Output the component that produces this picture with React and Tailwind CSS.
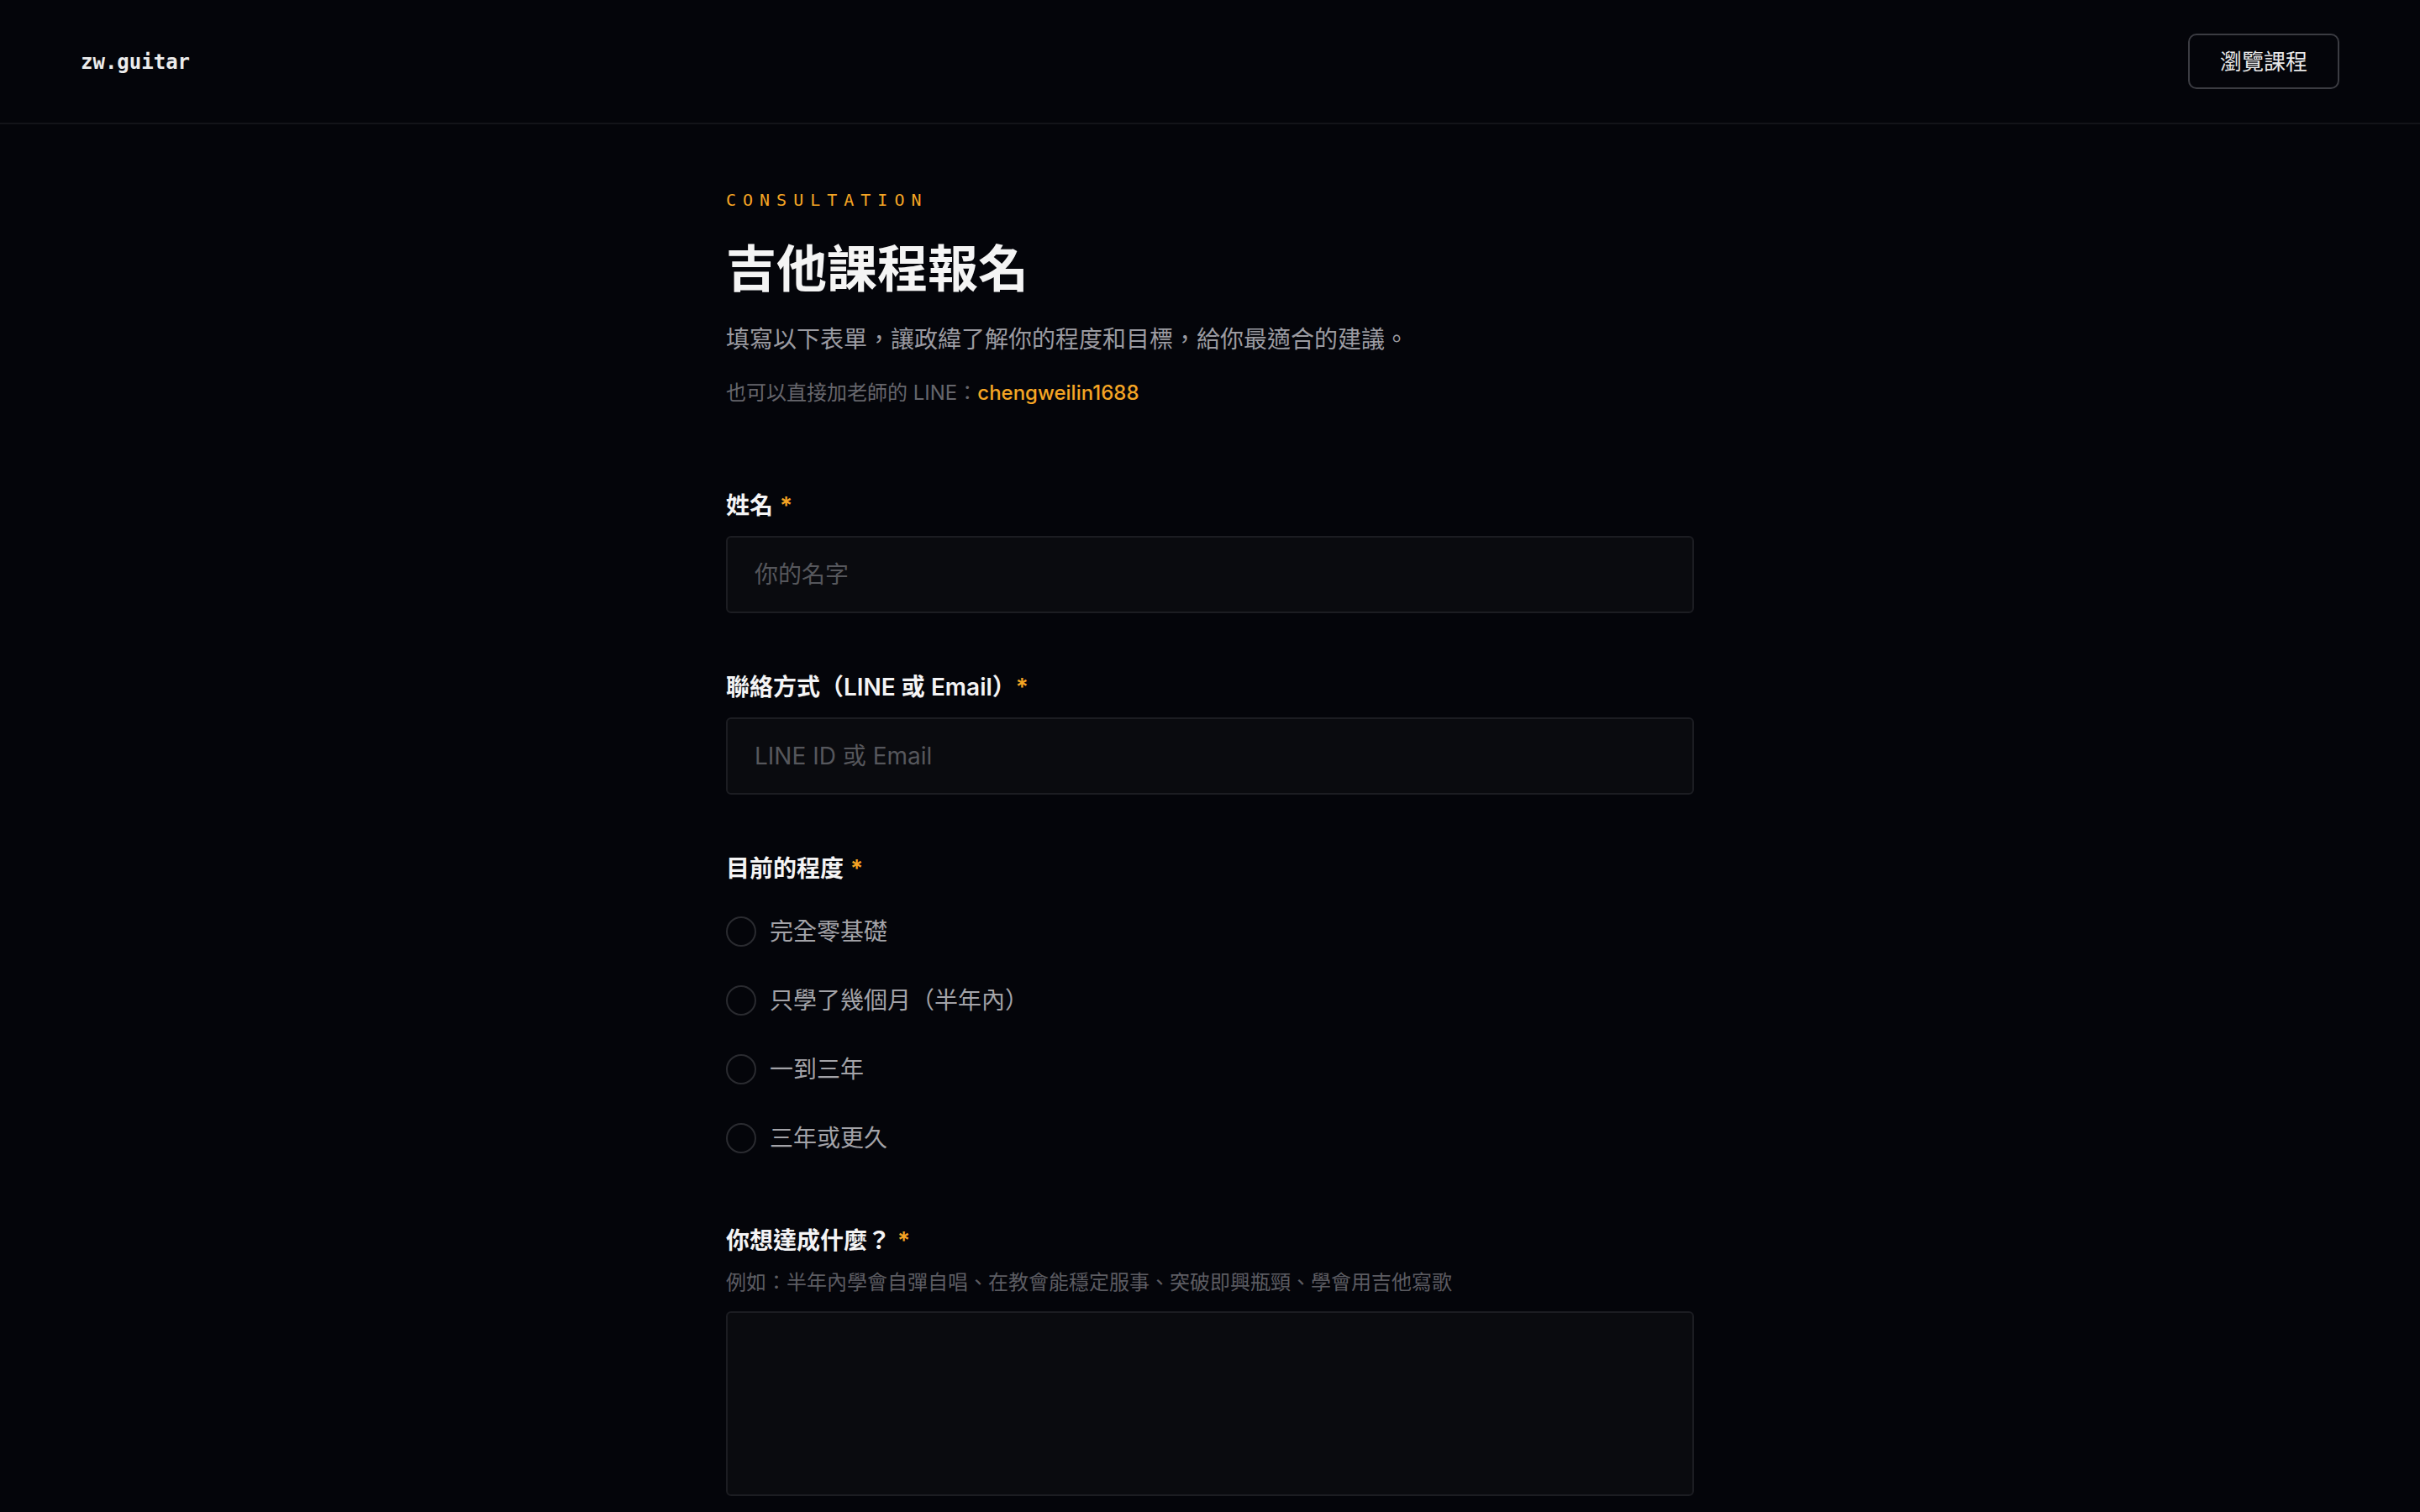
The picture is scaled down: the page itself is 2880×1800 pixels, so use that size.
import { useState } from 'react';

const levels = ['完全零基礎', '只學了幾個月（半年內）', '一到三年', '三年或更久'];

function Label({ children, tight }) {
  return (
    <label className="block text-[28px] leading-[40px] font-semibold text-[#f4f4f5]">
      {children}
      <span className={tight ? 'ml-0 text-[#f5a524]' : 'ml-2 text-[#f5a524]'}>*</span>
    </label>
  );
}

export default function App() {
  const [level, setLevel] = useState(null);

  return (
    <div className="min-h-screen bg-[#04050a] font-['Inter','Noto_Sans_CJK_TC',sans-serif] text-white">
      <header className="flex h-[148px] items-center justify-between border-b-2 border-[#131419] px-24">
        <span className="pt-[2px] font-['DejaVu_Sans_Mono',monospace] text-[24px] font-bold text-[#ececec]">
          zw.guitar
        </span>
        <button className="h-[66px] rounded-[10px] border-2 border-[#3b3c42] px-9 text-[26px] text-[#e8e8e8]">
          瀏覽課程
        </button>
      </header>

      <main className="mx-auto max-w-[1152px] pt-[74px]">
        <p className="font-['DejaVu_Sans_Mono',monospace] text-[20px] leading-[32px] tracking-[0.4em] text-[#f5a524]">
          CONSULTATION
        </p>
        <h1 className="mt-[30px] text-[60px] font-bold leading-[72px] text-[#f4f4f4]">吉他課程報名</h1>
        <p className="mt-[26px] text-[28px] leading-[44px] text-[#9b9ba1]">
          填寫以下表單，讓政緯了解你的程度和目標，給你最適合的建議。
        </p>
        <p className="mt-6 text-[24px] leading-[36px] text-[#66666c]">
          也可以直接加老師的 LINE：
          <span className="font-medium text-[#f5a524]">chengweilin1688</span>
        </p>

        <form className="mt-[96px]">
          <div>
            <Label>姓名</Label>
            <input
              placeholder="你的名字"
              className="mt-4 h-[92px] w-full rounded-[6px] border-2 border-[#1c1d22] bg-[#0a0b0f] px-8 text-[28px] text-white outline-none placeholder:text-[#56575c]"
            />
          </div>

          <div className="mt-[68px]">
            <Label tight>聯絡方式（LINE 或 Email）</Label>
            <input
              placeholder="LINE ID 或 Email"
              className="mt-4 h-[92px] w-full rounded-[6px] border-2 border-[#1c1d22] bg-[#0a0b0f] px-8 text-[28px] text-white outline-none placeholder:text-[#56575c]"
            />
          </div>

          <div className="mt-[68px]">
            <Label>目前的程度</Label>
            <div className="mt-[14px] flex flex-col">
              {levels.map((item) => (
                <button
                  type="button"
                  key={item}
                  onClick={() => setLevel(item)}
                  className="flex h-[82px] items-center gap-4 text-left"
                >
                  <span className="flex h-[36px] w-[36px] items-center justify-center rounded-full border-2 border-[#2a2b30]">
                    {level === item && <span className="h-4 w-4 rounded-full bg-[#f5a524]" />}
                  </span>
                  <span className="text-[28px] leading-[44px] text-[#a3a3a8]">{item}</span>
                </button>
              ))}
            </div>
          </div>

          <div className="mt-[61px]">
            <Label>你想達成什麼？</Label>
            <p className="mt-3 text-[24px] leading-[36px] text-[#5c5c62]">
              例如：半年內學會自彈自唱、在教會能穩定服事、突破即興瓶頸、學會用吉他寫歌
            </p>
            <textarea className="mt-4 block h-[220px] w-full resize-none rounded-[6px] border-2 border-[#1c1d22] bg-[#0a0b0f] px-8 py-6 text-[28px] text-white outline-none" />
          </div>
        </form>
      </main>
    </div>
  );
}
